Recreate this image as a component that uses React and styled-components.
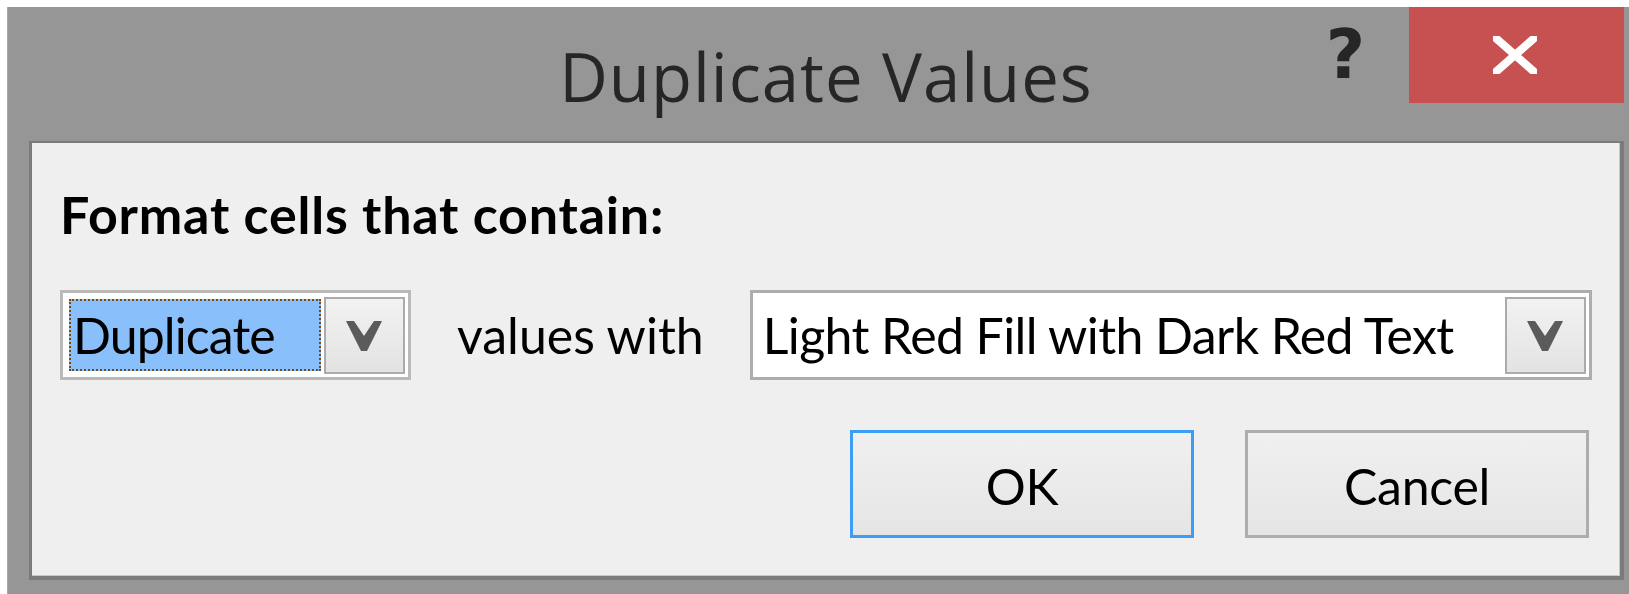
import React from "react";
import styled, { createGlobalStyle } from "styled-components";

const GlobalStyle = createGlobalStyle`
  html, body {
    margin: 0;
    padding: 0;
    background: #ffffff;
  }
  body {
    overflow: hidden;
  }
  #root {
    width: 1629px;
    height: 594px;
  }
`;

const Window = styled.div`
  margin: 7px 0 0 7px;
  width: 1622px;
  height: 587px;
  background: #969696;
  box-shadow: inset 1px 0 0 #a9a9a9;
  display: flex;
  flex-direction: column;
  overflow: hidden;
`;

const TitleBar = styled.div`
  flex: none;
  height: 134px;
  display: grid;
  grid-template-columns: 1fr auto 1fr;
  padding: 0 5px 0 21px;
`;

const Title = styled.h1`
  grid-column: 2;
  margin: 36px 0 0;
  font-family: "Open Sans", sans-serif;
  font-weight: 400;
  font-size: 67px;
  line-height: 67px;
  letter-spacing: 1px;
  color: #262626;
  white-space: nowrap;
`;

const CaptionButtons = styled.div`
  grid-column: 3;
  justify-self: end;
  display: flex;
  align-items: flex-start;
`;

const HelpButton = styled.div`
  width: 127px;
  height: 96px;
  display: flex;
  align-items: center;
  justify-content: center;
  font-family: "DejaVu Sans", sans-serif;
  font-weight: 700;
  font-size: 68px;
  line-height: 1;
  color: #262626;
`;

const CloseButton = styled.div`
  width: 215px;
  height: 96px;
  background: #c75050;
  display: flex;
  align-items: center;
  justify-content: center;
  padding-right: 3px;
  box-sizing: border-box;
`;

const Panel = styled.div`
  flex: none;
  margin: 0 5px 0 22px;
  background: #efefef;
  border-style: solid;
  border-color: #7b7b7b;
  border-width: 2px 4px 4px 3px;
  box-shadow: inset -1px -1px 0 #c8c8c8;
  padding: 40px 28px 38px 28px;
  display: flex;
  flex-direction: column;
  font-family: Lato, "Open Sans", sans-serif;
  color: #000000;
`;

const Heading = styled.div`
  font-weight: 700;
  font-size: 52px;
  line-height: 62px;
  letter-spacing: 0.8px;
  margin-bottom: 45px;
  white-space: nowrap;
`;

const RuleRow = styled.div`
  display: flex;
  align-items: center;
  gap: 46px;
`;

const Combo = styled.div`
  box-sizing: border-box;
  height: 90px;
  width: ${(p) => (p.$width ? `${p.$width}px` : "auto")};
  flex: ${(p) => (p.$grow ? "1 1 auto" : "none")};
  border: 3px solid ${(p) => (p.$grow ? "#adadad" : "#b9b9b9")};
  background: #ffffff;
  padding: 4px 3px 3px 3px;
  display: flex;
`;

const ComboValue = styled.div`
  flex: 1;
  margin: 2px 3px 3px 3px;
  padding-left: 2px;
  display: flex;
  align-items: center;
  font-size: 50px;
  line-height: 1;
  letter-spacing: ${(p) => p.$tracking}px;
  white-space: nowrap;
  background: ${(p) => (p.$selected ? "#89bffa" : "transparent")};
  border: 2px dotted ${(p) => (p.$selected ? "#75491a" : "transparent")};
`;

const DropButton = styled.div`
  flex: none;
  box-sizing: border-box;
  width: 81px;
  border: 2px solid #ababab;
  background: linear-gradient(#f2f2f2, #e3e3e3);
  display: flex;
  align-items: center;
  justify-content: center;
  padding-right: 2px;
`;

const InlineLabel = styled.span`
  flex: none;
  font-size: 50px;
  line-height: 1;
  white-space: nowrap;
`;

const ButtonRow = styled.div`
  margin-top: 50px;
  display: flex;
  justify-content: flex-end;
  gap: 51px;
  padding-right: 3px;
`;

const DialogButton = styled.button`
  box-sizing: border-box;
  width: 344px;
  height: 108px;
  margin: 0;
  padding: 4px 0 0;
  border: 3px solid ${(p) => (p.$primary ? "#3d9cf4" : "#adadad")};
  background: linear-gradient(#f0f0f0, #e5e5e5);
  font-family: Lato, "Open Sans", sans-serif;
  font-size: 50px;
  line-height: 1;
  letter-spacing: -0.3px;
  color: #000000;
  cursor: default;
`;

const Chevron = () => (
  <svg width="36" height="30" viewBox="0 0 36 30" aria-hidden="true">
    <polygon points="0,0 8,0 18,15 28,0 36,0 21,30 15,30" fill="#5b5b5b" />
  </svg>
);

const CloseGlyph = () => (
  <svg width="44" height="38" viewBox="0 0 44 38" aria-hidden="true">
    <line x1="-3" y1="-3" x2="47" y2="41" stroke="#ffffff" strokeWidth="8" />
    <line x1="47" y1="-3" x2="-3" y2="41" stroke="#ffffff" strokeWidth="8" />
  </svg>
);

const Select = ({ value, selected, width, grow, tracking = 0 }) => (
  <Combo $width={width} $grow={grow}>
    <ComboValue $selected={selected} $tracking={tracking}>
      {value}
    </ComboValue>
    <DropButton>
      <Chevron />
    </DropButton>
  </Combo>
);

export default function App() {
  return (
    <>
      <GlobalStyle />
      <Window>
        <TitleBar>
          <Title>Duplicate Values</Title>
          <CaptionButtons>
            <HelpButton>?</HelpButton>
            <CloseButton>
              <CloseGlyph />
            </CloseButton>
          </CaptionButtons>
        </TitleBar>
        <Panel>
          <Heading>Format cells that contain:</Heading>
          <RuleRow>
            <Select value="Duplicate" selected width={351} tracking={-0.9} />
            <InlineLabel>values with</InlineLabel>
            <Select
              value="Light Red Fill with Dark Red Text"
              grow
              tracking={-0.6}
            />
          </RuleRow>
          <ButtonRow>
            <DialogButton $primary>OK</DialogButton>
            <DialogButton>Cancel</DialogButton>
          </ButtonRow>
        </Panel>
      </Window>
    </>
  );
}
